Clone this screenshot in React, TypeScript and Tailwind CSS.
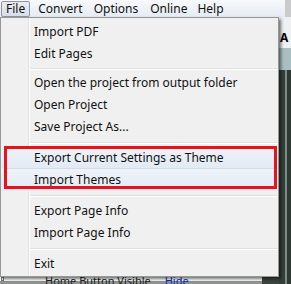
import React from 'react'

const font = { fontFamily: '"Segoe UI", "Noto Sans", "Liberation Sans", sans-serif' }

type Entry = { label: string } | 'sep' | 'sep7'

const top: Entry[] = [
  { label: 'Import PDF' },
  { label: 'Edit Pages' },
  'sep7',
  { label: 'Open the project from output folder' },
  { label: 'Open Project' },
  { label: 'Save Project As...' },
  'sep',
]

const bottom: Entry[] = [
  'sep',
  { label: 'Export Page Info' },
  { label: 'Import Page Info' },
  'sep',
  { label: 'Exit' },
]

function Row({ label, hot, short }: { label: string; hot?: boolean; short?: boolean }) {
  return (
    <div
      className={
        (short ? 'h-[21px] ' : 'h-[22px] ') +
        'flex items-center pl-[33px] text-[12px] text-[#111] ' +
        (hot ? 'bg-gradient-to-b from-[#eef3fa] to-[#e3eaf4]' : '')
      }
    >
      {label}
    </div>
  )
}

function Sep({ small }: { small?: boolean }) {
  return (
    <div className={(small ? 'h-[7px]' : 'h-[9px]') + ' flex flex-col justify-center pl-[29px]'}>
      <div className="h-px bg-[#e0e0e0]" />
      <div className="h-px bg-white" />
    </div>
  )
}

function List({ items }: { items: Entry[] }) {
  return (
    <>
      {items.map((it, i) =>
        it === 'sep' ? <Sep key={i} /> : it === 'sep7' ? <Sep key={i} small /> : <Row key={i} label={it.label} />
      )}
    </>
  )
}

export default function App() {
  return (
    <div className="relative w-[291px] h-[284px] overflow-hidden bg-[#3a4540]" style={font}>
      {/* menu bar */}
      <div className="flex h-[17px]">
        <div className="w-[285px] flex items-center bg-gradient-to-b from-[#f7f9fc] to-[#e6ebf3] text-[12px] text-[#111]">
          <div className="ml-px h-[16px] px-[4px] flex items-center rounded-[2px] border border-[#8f96a0] bg-gradient-to-b from-[#e9edf3] to-[#d8dee8]">
            File
          </div>
          <span className="ml-[8px]">Convert</span>
          <span className="ml-[11px]">Options</span>
          <span className="ml-[12px]">Online</span>
          <span className="ml-[10px]">Help</span>
        </div>
        <div className="flex-1 bg-[#c9cbcd]" />
      </div>

      {/* window behind */}
      <div className="flex h-[267px]">
        <div className="w-[279px]" />
        <div className="flex-1 flex flex-col">
          <div className="h-[11px] bg-[#eef0f2]" />
          <div className="h-[20px] bg-[#eef0f2] text-[12px] font-bold text-black pl-[1px] leading-[20px]">A</div>
          <div className="h-[22px] bg-[#a9bfc2]" />
          <div className="flex-1 flex">
            <div className="w-[6px] bg-[#34403b]" />
            <div className="w-[2px] bg-[#7f8a85]" />
            <div className="flex-1 bg-[#2f3934]" />
          </div>
        </div>
      </div>

      {/* bottom fragment of the window under the menu */}
      <div className="absolute left-0 top-[277px] w-[262px] h-[7px] overflow-hidden">
        <div className="h-[4px] bg-white flex items-start text-[11px] leading-[11px] text-[#222]">
          <div className="w-[3px] h-[4px] border border-[#777] ml-[1px]" />
          <span className="ml-[41px] -mt-[2px]">Home Button Visible</span>
          <span className="ml-[14px] -mt-[2px] text-[#1030c0]">Hide</span>
        </div>
        <div className="h-[3px] bg-[#8e9290]" />
      </div>

      {/* dropdown */}
      <div className="absolute left-0 top-[17px] w-[279px] h-[260px] border border-[#979797] bg-[#f0f0f0] shadow-[2px_2px_3px_rgba(0,0,0,0.55)]">
        <div className="absolute left-[27px] top-0 bottom-0 w-px bg-[#e2e3e3]" />
        <div className="absolute left-[28px] top-0 bottom-0 w-px bg-white" />
        <div className="relative pt-[3px]">
          <List items={top} />
          <Row label="Export Current Settings as Theme" hot short />
          <div className="h-px bg-[#d3dde9] ml-[3px]" />
          <Row label="Import Themes" hot />
          <List items={bottom} />
        </div>
        {/* annotation */}
        <div className="absolute left-[3px] top-[128px] w-[273px] h-[43px] border-[3px] border-[#e8121a]" />
      </div>
    </div>
  )
}
